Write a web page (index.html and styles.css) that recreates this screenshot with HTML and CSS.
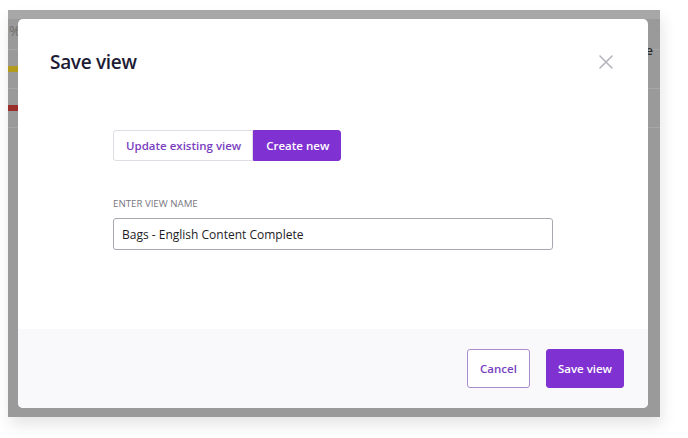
FILE: index.html
```html
<!DOCTYPE html>
<html lang="en">
<head>
<meta charset="utf-8">
<title>Save view</title>
<link rel="stylesheet" href="styles.css">
</head>
<body>
<div class="stage">
  <div class="app">
    <div class="app-top"></div>
    <div class="app-row app-head"><span class="pct">%</span><span class="tail">e</span></div>
    <div class="app-row"><span class="bar yellow"></span></div>
    <div class="app-row"><span class="bar red"></span></div>
    <div class="app-row app-rest"></div>
  </div>
  <div class="modal">
    <div class="modal-header">
      <h1 class="modal-title">Save view</h1>
      <button class="close" aria-label="Close">
        <svg width="14" height="14" viewBox="0 0 14 14"><path d="M1 1L13 13M13 1L1 13" stroke="#b4b4bc" stroke-width="1.6" fill="none" stroke-linecap="round"/></svg>
      </button>
    </div>
    <div class="modal-body">
      <div class="segmented">
        <button class="seg">Update existing view</button>
        <button class="seg active">Create new</button>
      </div>
      <label class="field-label">ENTER VIEW NAME</label>
      <div class="input">Bags - English Content Complete</div>
    </div>
    <div class="modal-footer">
      <button class="btn btn-outline">Cancel</button>
      <button class="btn btn-primary">Save view</button>
    </div>
  </div>
</div>
</body>
</html>
```
FILE: styles.css
```css
* { box-sizing: border-box; }
html, body { margin: 0; padding: 0; background: #ffffff; }
body {
  width: 688px;
  height: 438px;
  overflow: hidden;
  font-family: "Open Sans", "Noto Sans", sans-serif;
  padding: 10px 0 0 8px;
}
.stage {
  position: relative;
  width: 652px;
  height: 407px;
  background: #9a9a9a;
  box-shadow: 2px 8px 14px rgba(0,0,0,0.10);
}
.app { display: flex; flex-direction: column; height: 100%; }
.app-top { height: 9px; background: #a7a7a7; }
.app-row {
  position: relative;
  height: 39px;
  border-bottom: 1px solid #a6a6a6;
  display: flex;
  align-items: center;
}
.app-head { height: 31px; }
.app-rest { flex: 1; border-bottom: none; }
.pct { position: absolute; left: 1px; top: 4px; font-size: 14px; color: #6f6f6f; line-height: 16px; }
.tail { position: absolute; right: 7px; top: 24px; font-size: 13px; color: #2a2a2a; font-weight: 600; line-height: 14px; }
.bar { width: 10px; height: 6px; }
.yellow { background: #b39c1d; }
.red { background: #9a2e2b; }

.modal {
  position: absolute;
  left: 10px;
  top: 9px;
  width: 630px;
  height: 389px;
  background: #ffffff;
  border-radius: 5px;
  display: flex;
  flex-direction: column;
  overflow: hidden;
}
.modal-header {
  display: flex;
  justify-content: space-between;
  align-items: flex-start;
  padding: 30px 35px 0 32px;
}
.modal-title {
  margin: 0;
  font-size: 19px;
  font-weight: 600;
  color: #1d1b35;
  line-height: 26px;
  letter-spacing: -0.3px;
}
.close {
  border: 0;
  background: none;
  padding: 0;
  margin-top: 6px;
  width: 14px;
  height: 14px;
  display: flex;
}
.modal-body {
  flex: 1;
  width: 440px;
  margin: 0 auto;
  padding-top: 55px;
  display: flex;
  flex-direction: column;
  align-items: flex-start;
}
.segmented { display: flex; }
.seg {
  font-family: inherit;
  font-size: 11.5px;
  font-weight: 600;
  height: 31px;
  padding: 0 11px 0 12px;
  border: 1px solid #dedde3;
  background: #fff;
  color: #7a3fc0;
  border-radius: 3px 0 0 3px;
  white-space: nowrap;
}
.seg.active {
  background: #8031d2;
  border-color: #8031d2;
  color: #fff;
  border-radius: 0 3px 3px 0;
}
.field-label {
  margin-top: 37px;
  font-size: 9.7px;
  color: #77767e;
  line-height: 12px;
}
.input {
  margin-top: 8px;
  width: 440px;
  height: 32px;
  border: 1px solid #a9a8b0;
  border-radius: 3px;
  padding: 0 8px;
  display: flex;
  align-items: center;
  font-size: 12px;
  color: #1e1d26;
}
.modal-footer {
  height: 79px;
  background: #f9f9fb;
  display: flex;
  justify-content: flex-end;
  align-items: center;
  gap: 16px;
  padding: 0 24px;
}
.btn {
  font-family: inherit;
  font-size: 11.5px;
  font-weight: 600;
  height: 39px;
  border-radius: 3px;
  white-space: nowrap;
}
.btn-outline {
  padding: 0 12px;
  background: #fff;
  color: #7a3fc0;
  border: 1px solid #a98dcb;
}
.btn-primary {
  padding: 0 11px;
  background: #8031d2;
  color: #fff;
  border: 1px solid #8031d2;
}
```
